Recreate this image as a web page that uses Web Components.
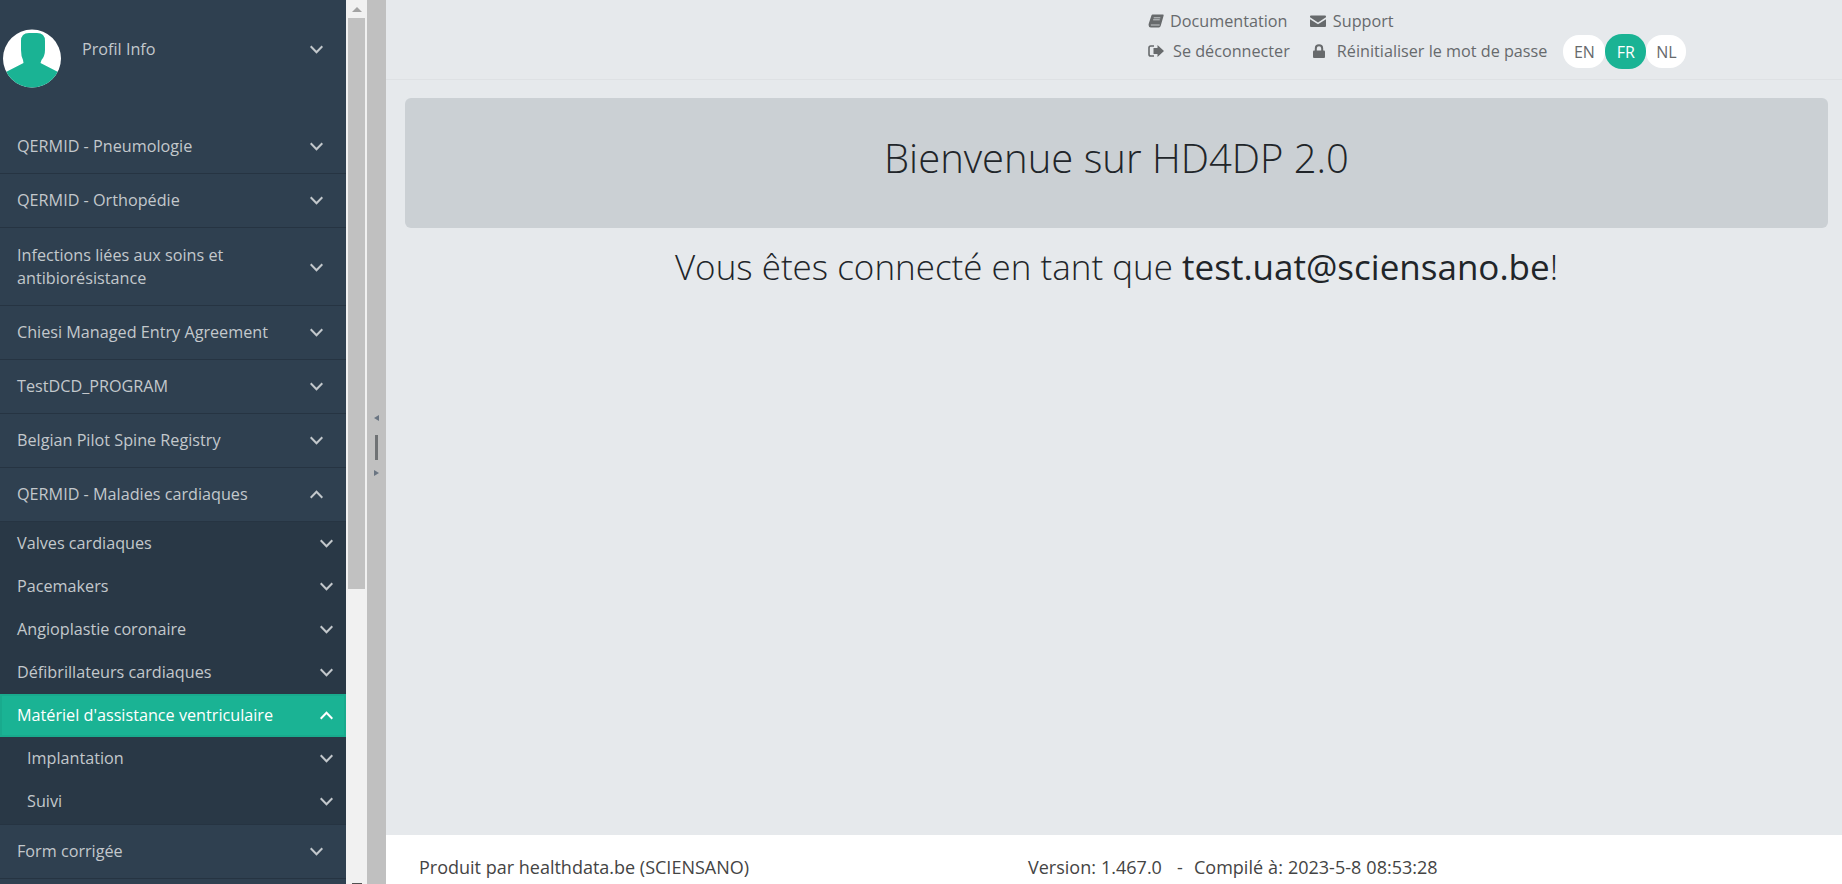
<!DOCTYPE html>
<html lang="fr"><head><meta charset="utf-8"><title>HD4DP 2.0</title>
<style>
html,body{margin:0;height:100%;overflow:hidden}
body{font-family:"Open Sans",sans-serif;}
</style></head><body>
<hd-app>
  <hd-sidebar slot="sidebar">
    <hd-profile></hd-profile>
    <hd-item label="QERMID - Pneumologie"></hd-item>
    <hd-item label="QERMID - Orthopédie"></hd-item>
    <hd-item label="Infections liées aux soins et antibiorésistance" tall></hd-item>
    <hd-item label="Chiesi Managed Entry Agreement"></hd-item>
    <hd-item label="TestDCD_PROGRAM"></hd-item>
    <hd-item label="Belgian Pilot Spine Registry"></hd-item>
    <hd-item label="QERMID - Maladies cardiaques" open></hd-item>
    <hd-subnav>
      <hd-subitem label="Valves cardiaques"></hd-subitem>
      <hd-subitem label="Pacemakers"></hd-subitem>
      <hd-subitem label="Angioplastie coronaire"></hd-subitem>
      <hd-subitem label="Défibrillateurs cardiaques"></hd-subitem>
      <hd-subitem label="Matériel d'assistance ventriculaire" active></hd-subitem>
      <hd-subitem label="Implantation" nested></hd-subitem>
      <hd-subitem label="Suivi" nested></hd-subitem>
    </hd-subnav>
    <hd-item label="Form corrigée"></hd-item>
    <hd-item label="" ></hd-item>
  </hd-sidebar>
  <hd-scrollbar slot="scroll"></hd-scrollbar>
  <hd-splitter slot="split"></hd-splitter>
  <hd-topbar slot="top"></hd-topbar>
  <hd-welcome slot="main" title-text="Bienvenue sur HD4DP 2.0"></hd-welcome>
  <hd-footer slot="foot"></hd-footer>
</hd-app>
<script>
const chev=(up)=>`<svg width="13" height="9" viewBox="0 0 13 9" fill="none" stroke="currentColor" stroke-width="2"><polyline points="${up?'0.7,7.700 6.500,1.800 12.300,7.700':'0.7,1.300 6.500,7.200 12.300,1.300'}"/></svg>`;
function def(name,html){customElements.define(name,class extends HTMLElement{connectedCallback(){if(this.shadowRoot)return;const r=this.attachShadow({mode:'open'});r.innerHTML=typeof html==='function'?html(this):html;}});}

def('hd-app',`<style>
:host{display:flex;width:1842px;height:884px;overflow:hidden}
.side{width:346px;flex:none;height:884px;overflow:hidden}
.content{flex:1;display:flex;flex-direction:column;background:#e6e9ec;min-width:0}
.main{flex:1}
</style>
<div class="side"><slot name="sidebar"></slot></div>
<slot name="scroll"></slot><slot name="split"></slot>
<div class="content"><slot name="top"></slot><div class="main"><slot name="main"></slot></div><slot name="foot"></slot></div>`);

def('hd-sidebar',`<style>:host{display:block;background:#2f4050;height:884px;font-size:16.2px;color:#c3c8cc}</style><slot></slot>`);

def('hd-profile',`<style>
:host{display:flex;height:120px;box-sizing:border-box;padding:29px 0 0 3px;align-items:flex-start}
svg.a{display:block;flex:none}
.t{margin-left:21px;margin-top:10px;line-height:20px;flex:1}
.c{margin:16px 23px 0 0;line-height:0}
</style>
<svg class="a" width="58" height="59" viewBox="0 0 58 59"><defs><clipPath id="c"><circle cx="29" cy="29.500" r="29"/></clipPath></defs><circle cx="29" cy="29.500" r="29" fill="#fff"/><path clip-path="url(#c)" d="M18 12Q18 4 26 4H34Q42 4 42 12V21Q42 27 38.500 31L37.500 34L57 44V59H1V44L20.500 34L20 31Q18 27 18 21Z" fill="#1ab394"/></svg>
<div class="t">Profil Info</div><div class="c">${chev(false)}</div>`);

def('hd-item',el=>`<style>
:host{display:flex;align-items:center;min-height:54px;border-bottom:1px solid #263442;padding:0 23px 0 17px;box-sizing:border-box;line-height:23px}
:host([tall]){min-height:78px;padding-top:1px}
.t{flex:1;max-width:275px}
.c{line-height:0;margin-left:auto}
</style><div class="t">${el.getAttribute('label')}</div><div class="c">${el.getAttribute('label')?chev(el.hasAttribute('open')):''}</div>`);

def('hd-subnav',`<style>:host{display:block;background:#293846;border-bottom:1px solid #263442;padding-bottom:1px}</style><slot></slot>`);

def('hd-subitem',el=>`<style>
:host{display:flex;align-items:center;height:43px;box-sizing:border-box;padding:0 13px 0 ${el.hasAttribute('nested')?27:17}px;${el.hasAttribute('active')?'background:#1ab394;color:#fff;box-shadow:inset 0 0 0 2px #19aa8d':''}}
.t{flex:1;padding-bottom:2px}.c{line-height:0}
</style><div class="t">${el.getAttribute('label')}</div><div class="c">${chev(el.hasAttribute('active'))}</div>`);

def('hd-scrollbar',`<style>
:host{display:flex;flex-direction:column;width:21px;flex:none;background:#f1f1f1;height:884px;box-sizing:border-box;padding:0 2px;overflow:hidden;align-items:center}
.u{height:18px;display:flex;align-items:center;justify-content:center}
.tr{width:0;height:0;border-left:5px solid transparent;border-right:5px solid transparent;border-bottom:5px solid #a3a3a3}
.th{width:17px;height:571px;background:#c1c1c1}
.g{flex:1}
.d{width:10px;height:1px;background:#505050;flex:none}
</style><div class="u"><div class="tr"></div></div><div class="th"></div><div class="g"></div><div class="d"></div>`);

def('hd-splitter',`<style>
:host{display:flex;flex-direction:column;align-items:center;width:19px;flex:none;background:#c0c0c0;height:884px;box-sizing:border-box;padding-top:415px}
.l{width:0;height:0;border-top:3px solid transparent;border-bottom:3px solid transparent;border-right:5px solid #6a7582}
.r{width:0;height:0;border-top:3px solid transparent;border-bottom:3px solid transparent;border-left:5px solid #6a7582}
.b{width:3px;height:25px;background:#6f7274;margin:14px 0 10px}
</style><div class="l"></div><div class="b"></div><div class="r"></div>`);

const icons={
book:`<svg width="16" height="14" viewBox="0 0 14 14" preserveAspectRatio="none"><path fill="#676a6c" d="M4 .5H13Q14 .5 13.700 1.500L11.200 11.500Q10.800 13.500 9.500 13.500H2.500Q0.500 13.500 0.500 11Q0.500 10 0.700 9.500L3 1.500Q3.300 .5 4 .5Z"/><path stroke="#e6e9ec" stroke-width=".7" fill="none" d="M2.500 11H10.200M5 3.800H10.800M4.500 5.800H10.300"/></svg>`,
mail:`<svg width="16" height="14" viewBox="0 0 16 14"><path fill="#676a6c" d="M1 1.500H15Q16 1.500 16 2.500V3.300L8 8.500L0 3.300V2.500Q0 1.500 1 1.500ZM0 5.200L8 10.300L16 5.200V12Q16 13 15 13H1Q0 13 0 12Z"/></svg>`,
out:`<svg width="16" height="14" viewBox="0 0 16 14"><path fill="#676a6c" d="M9.500 2.500V1L16 7L9.500 13V10H5.500V4H9.500Z"/><path fill="none" stroke="#676a6c" stroke-width="1.600" d="M6 2H2.800Q1 2 1 3.800V10.200Q1 12 2.800 12H6"/></svg>`,
lock:`<svg width="12" height="15" viewBox="0 0 12 15"><path fill="#676a6c" d="M1 6.500H11Q12 6.500 12 7.500V13Q12 14 11 14H1Q0 14 0 13V7.500Q0 6.500 1 6.500Z"/><path fill="none" stroke="#676a6c" stroke-width="2" d="M2.800 7V4.500Q2.800 1.300 6 1.300Q9.200 1.300 9.200 4.500V7"/></svg>`};

def('hd-link',el=>`<style>:host{display:inline-flex;align-items:center;color:#676a6c;font-size:16.2px;line-height:20px;white-space:nowrap}.i{display:inline-flex;margin-right:var(--g,8px)}</style><span class="i">${icons[el.getAttribute('icon')]}</span><slot></slot>`);

def('hd-lang',`<style>:host{display:flex;align-items:center;justify-content:center;width:var(--w,41px);height:33px;border-radius:16px;background:#fff;color:#676a6c;font-size:16px}
:host([on]){background:#1ab394;color:#fff;height:35px;border-radius:17px;z-index:1;position:relative}</style><slot></slot>`);

def('hd-topbar',`<style>
:host{display:block;height:80px;box-sizing:border-box;border-bottom:1px solid #dee1e4}
.wrap{display:flex;padding:11px 0 0 762px;align-items:flex-start}
.links{display:grid;grid-template-columns:auto auto;column-gap:23px;row-gap:10px;justify-content:start}
.langs{display:flex;align-items:center;margin:23px 0 0 16px}
</style><div class="wrap"><div class="links">
<hd-link icon="book" style="--g:6px">Documentation</hd-link><hd-link icon="mail" style="--g:7px;margin-left:-3px">Support</hd-link>
<hd-link icon="out" style="--g:9px">Se déconnecter</hd-link><hd-link icon="lock" style="--g:12px">Réinitialiser le mot de passe</hd-link>
</div><div class="langs"><hd-lang style="--w:42px">EN</hd-lang><hd-lang on>FR</hd-lang><hd-lang style="--w:40px">NL</hd-lang></div></div>`);

def('hd-welcome',el=>`<style>
:host{display:block;padding:18px 14px 0 19px;color:#212529;text-align:center}
.j{background:#cbd0d4;border-radius:6px;height:130px;box-sizing:border-box;padding-bottom:12px;display:flex;align-items:center;justify-content:center;font-size:40px;font-weight:300}
.s{margin-top:14px;font-size:35px;font-weight:300;line-height:50px}
b{font-weight:400}
</style><div class="j">${el.getAttribute('title-text')}</div><div class="s">Vous êtes connecté en tant que <b>test.uat@sciensano.be</b>!</div>`);

def('hd-footer',`<style>
:host{display:flex;height:49px;box-sizing:border-box;background:#fff;padding:20px 0 0 33px;color:#444;font-size:18px;line-height:24px;white-space:nowrap}
.a{width:609px}.v{word-spacing:.4px}.v span{margin:0 1px 0 5px}
</style><div class="a">Produit par healthdata.be (SCIENSANO)</div><div class="v">Version: 1.467.0 &nbsp;<span>-</span>&nbsp; Compilé à: 2023-5-8 08:53:28</div>`);
</script>
</body></html>
